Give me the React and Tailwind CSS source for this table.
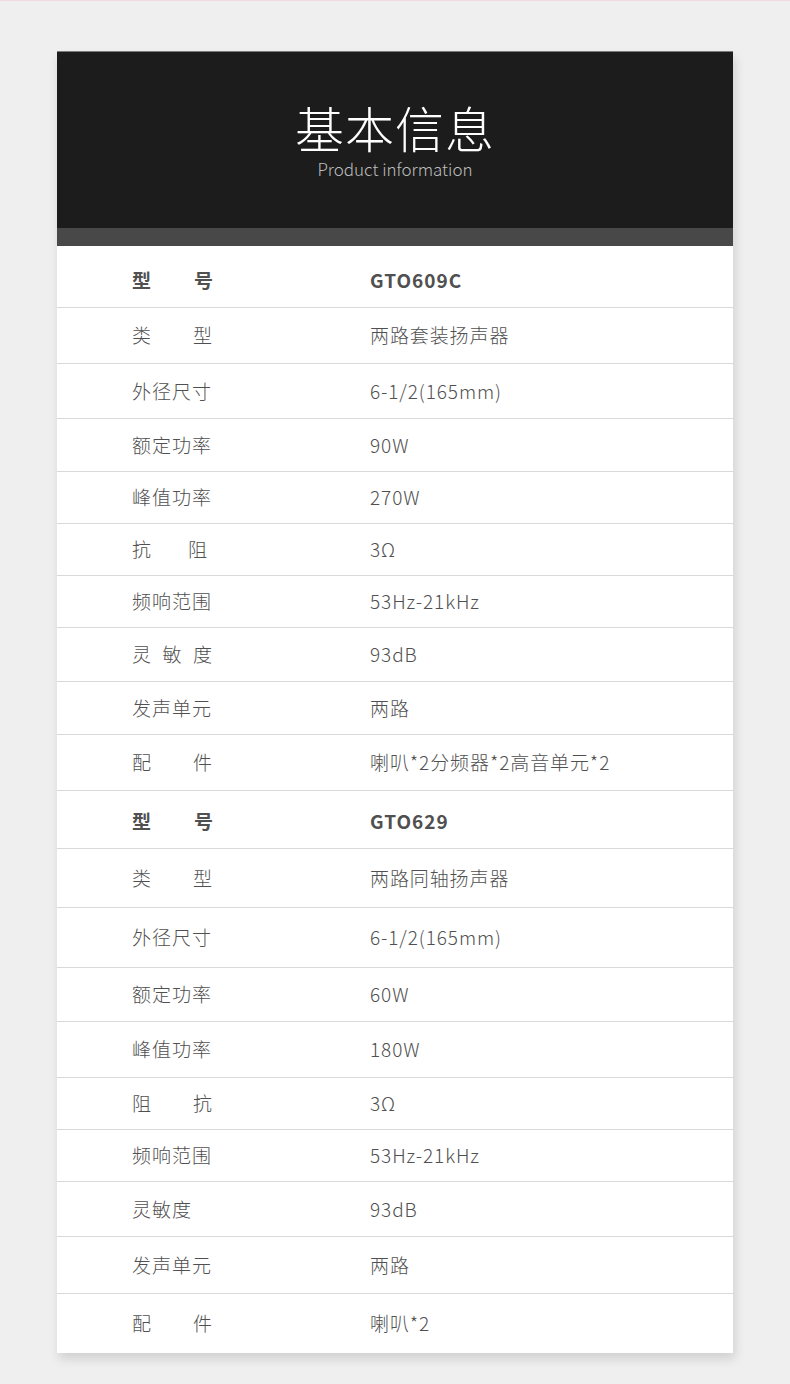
import React from 'react';

const font = { fontFamily: '"Noto Sans CJK SC", "Noto Sans", sans-serif' };

const tableA = [
  { label: '型号', value: 'GTO609C', h: 'h-[62px] pt-[7px]', bold: true, spread: true },
  { label: '类型', value: '两路套装扬声器', h: 'h-[56px]', spread: true },
  { label: '外径尺寸', value: '6-1/2(165mm)', h: 'h-[55px]' },
  { label: '额定功率', value: '90W', h: 'h-[53px]' },
  { label: '峰值功率', value: '270W', h: 'h-[52px]' },
  { label: '抗阻', value: '3Ω', h: 'h-[52px]', spread: true, narrow: true },
  { label: '频响范围', value: '53Hz-21kHz', h: 'h-[52px]' },
  { label: '灵敏度', value: '93dB', h: 'h-[54px]', spread: true },
  { label: '发声单元', value: '两路', h: 'h-[53px]' },
  { label: '配件', value: '喇叭*2分频器*2高音单元*2', h: 'h-[56px]', spread: true },
];

const tableB = [
  { label: '型号', value: 'GTO629', h: 'h-[58px] pt-[3px]', bold: true, spread: true },
  { label: '类型', value: '两路同轴扬声器', h: 'h-[59px]', spread: true },
  { label: '外径尺寸', value: '6-1/2(165mm)', h: 'h-[60px]' },
  { label: '额定功率', value: '60W', h: 'h-[54px]' },
  { label: '峰值功率', value: '180W', h: 'h-[56px]' },
  { label: '阻抗', value: '3Ω', h: 'h-[52px]', spread: true },
  { label: '频响范围', value: '53Hz-21kHz', h: 'h-[52px]' },
  { label: '灵敏度', value: '93dB', h: 'h-[55px]' },
  { label: '发声单元', value: '两路', h: 'h-[57px]' },
  { label: '配件', value: '喇叭*2', h: 'h-[59px]', spread: true },
];

const Row = ({ row, last }) => (
  <div className={`flex items-center ${row.h} ${last ? '' : 'border-b border-[#d9d9d9]'}`}>
    <div className="w-[313px] pl-[75px] shrink-0">
      <span
        className={`inline-block text-[19px] text-[#505050] ${row.bold ? 'font-bold' : 'font-light tracking-[1px]'} ${
          row.spread ? (row.narrow ? 'w-[76px] [text-align-last:justify]' : 'w-[81px] [text-align-last:justify]') : ''
        }`}
      >
        {row.label}
      </span>
    </div>
    <div className={`text-[19px] text-[#505050] ${row.bold ? 'font-bold tracking-[1px]' : 'font-light tracking-[0.9px]'}`}>
      {row.value}
    </div>
  </div>
);

export default function App() {
  const rows = [...tableA, ...tableB];
  return (
    <div className="min-h-[1384px] w-[790px] bg-[#efefef]" style={font}>
      <div className="h-px bg-[#f1d9dd]" />
      <div className="pt-[50px] px-[57px]">
        <div className="shadow-[2px_6px_10px_rgba(0,0,0,0.13)]">
          {/* Header */}
          <div className="h-[177px] bg-[#1c1c1c] border-t border-[#7a7a7a] flex flex-col items-center pt-[49px]">
            <h1 className="text-[49px] leading-[52px] font-extralight text-white tracking-[1px]">基本信息</h1>
            <p className="text-[17px] leading-[20px] font-light text-[#bdbdbd] mt-[6px]">Product information</p>
          </div>
          <div className="h-[18px] bg-[#484848]" />

          {/* Content */}
          <div className="bg-white">
            {rows.map((row, i) => (
              <Row key={i} row={row} last={i === rows.length - 1} />
            ))}
          </div>
        </div>
      </div>
    </div>
  );
}
